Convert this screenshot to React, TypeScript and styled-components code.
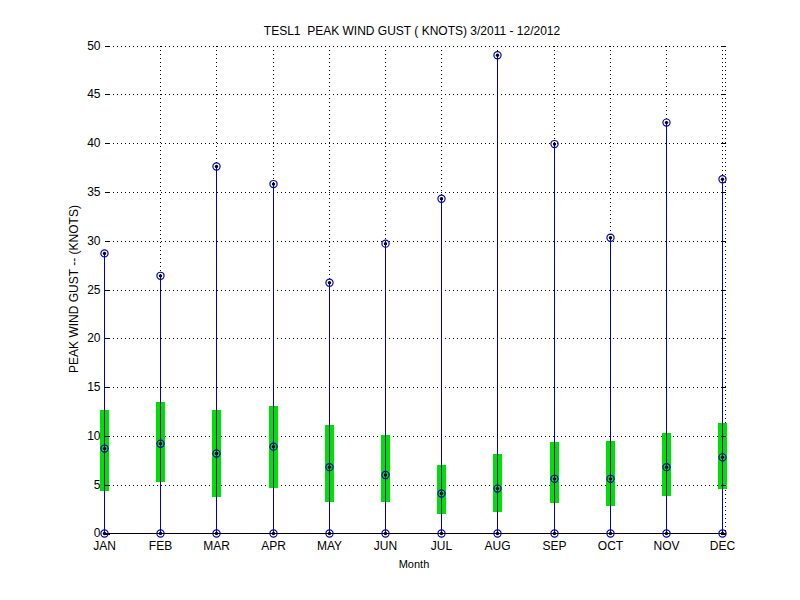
import React from "react";
import styled, { createGlobalStyle } from "styled-components";

const Global = createGlobalStyle`
  html, body { margin: 0; padding: 0; background: #fff; }
`;

const Figure = styled.div`
  width: 800px;
  height: 600px;
  background: #fff;
  font-family: "Liberation Sans", Arial, sans-serif;
  svg text { white-space: pre; }
`;

const months = ["JAN","FEB","MAR","APR","MAY","JUN","JUL","AUG","SEP","OCT","NOV","DEC"];
const data: [number, number, number, number][] = [
  [28.7, 4.4, 12.7, 8.7],
  [26.4, 5.3, 13.5, 9.2],
  [37.6, 3.7, 12.7, 8.2],
  [35.8, 4.7, 13.1, 8.9],
  [25.7, 3.2, 11.1, 6.8],
  [29.7, 3.2, 10.1, 6.0],
  [34.3, 2.0, 7.0, 4.1],
  [49.0, 2.2, 8.1, 4.6],
  [39.9, 3.1, 9.4, 5.6],
  [30.3, 2.8, 9.5, 5.6],
  [42.1, 3.8, 10.3, 6.8],
  [36.3, 4.6, 11.3, 7.8],
];

const L = 104.5, R = 725.5, T = 45.5, B = 533.5;
const X = (i: number) => Math.round(104 + i * 56.2) + 0.5;
const Y = (v: number) => B - v * ((B - T) / 50);

const Marker = ({ x, y }: { x: number; y: number }) => (
  <g>
    <circle cx={x} cy={y} r={3.6} fill="none" stroke="#0000c0" strokeWidth={1.2} />
    <circle cx={x} cy={y} r={1.7} fill="#000" />
  </g>
);

export default function App() {
  const yt = [0, 5, 10, 15, 20, 25, 30, 35, 40, 45, 50];
  return (
    <Figure>
      <Global />
      <svg width={800} height={600} fontFamily='"Liberation Sans", Arial, sans-serif' fontSize={11}>
        <g shapeRendering="crispEdges">
          {yt.slice(1).map((v) => (
            <line key={v} x1={L} x2={R} y1={Math.round(Y(v)) + 0.5} y2={Math.round(Y(v)) + 0.5} stroke="#000" strokeDasharray="1 3" />
          ))}
          {months.map((m, i) => i > 0 && (
            <line key={m} x1={X(i)} x2={X(i)} y1={T} y2={B} stroke="#000" strokeDasharray="1 3" />
          ))}
          <line x1={R} x2={R} y1={T} y2={B} stroke="#000" strokeDasharray="1 3" />
          {data.map(([, lo, hi], i) => (
            <rect key={i} x={X(i) - 5} y={Y(hi)} width={9} height={Y(lo) - Y(hi)} fill="#00e000" />
          ))}
          {data.map(([mx], i) => (
            <line key={i} x1={X(i)} x2={X(i)} y1={Y(mx)} y2={B} stroke="#0000c0" strokeWidth={1} />
          ))}
          <line x1={L} x2={R} y1={B} y2={B} stroke="#000" />
          {yt.map((v) => (
            <g key={v}>
              <line x1={L} x2={L + 5} y1={Math.round(Y(v)) + 0.5} y2={Math.round(Y(v)) + 0.5} stroke="#000" />
              <line x1={R - 5} x2={R} y1={Math.round(Y(v)) + 0.5} y2={Math.round(Y(v)) + 0.5} stroke="#000" />
            </g>
          ))}
        </g>
        {data.map(([mx, , , med], i) => (
          <g key={i}>
            <Marker x={X(i)} y={Y(mx)} />
            <Marker x={X(i)} y={Y(med)} />
            <Marker x={X(i)} y={B} />
          </g>
        ))}
        {yt.map((v) => (
          <text key={v} x={L - 4} y={Y(v) + 4 - (v === 0 ? 1 : 0)} textAnchor="end" fontSize={12}>{v}</text>
        ))}
        {months.map((m, i) => (
          <text key={m} x={X(i)} y={B + 16} textAnchor="middle" fontSize={12}>{m}</text>
        ))}
        <text x={414} y={568} textAnchor="middle" fontSize={11}>Month</text>
        <text x={412} y={35} textAnchor="middle" fontSize={12}>{"TESL1  PEAK WIND GUST ( KNOTS) 3/2011 - 12/2012"}</text>
        <text transform="translate(78 289) rotate(-90)" textAnchor="middle" fontSize={12}>PEAK WIND GUST -- (KNOTS)</text>
      </svg>
    </Figure>
  );
}
